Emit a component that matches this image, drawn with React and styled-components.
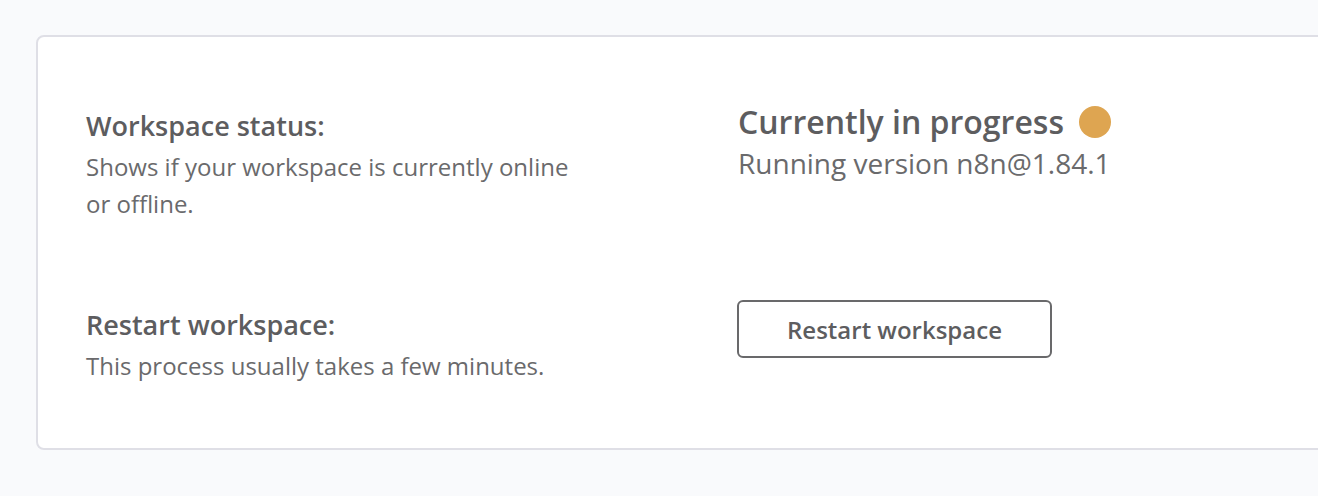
import styled, { createGlobalStyle } from 'styled-components'

const GlobalStyle = createGlobalStyle`
  body {
    margin: 0;
    background-color: #f9fafc;
    font-family: "Open Sans", "Noto Sans", sans-serif;
  }
`

const Page = styled.div`
  padding: 35px 0 46px 36px;
  overflow: hidden;
`

const Card = styled.div`
  width: 1320px;
  height: 415px;
  box-sizing: border-box;
  background-color: #ffffff;
  border: 2px solid #dfdfe6;
  border-radius: 8px;
  padding: 72px 0 0 48px;
  display: grid;
  grid-template-columns: 651px 1fr;
  grid-template-rows: 199px auto;
`

const Info = styled.div`
  display: flex;
  flex-direction: column;
`

const Title = styled.div`
  font-size: 27px;
  font-weight: 600;
  color: #5d5d5f;
  line-height: 34px;
  margin-bottom: 5px;
`

const Desc = styled.div`
  font-size: 24px;
  color: #6a6a6c;
  line-height: 37px;
  max-width: 500px;
`

const StatusHead = styled.div`
  display: flex;
  align-items: center;
  gap: 15px;
  padding-left: 1px;
  font-size: 32px;
  font-weight: 600;
  color: #5d5d5f;
  line-height: 40px;
  margin-top: -7px;
`

const Dot = styled.span`
  width: 32px;
  height: 32px;
  border-radius: 50%;
  background-color: ${p => p.color};
`

const Version = styled.div`
  font-size: 28px;
  color: #6a6a6c;
  line-height: 36px;
  margin-top: 3px;
  padding-left: 1px;
`

const Button = styled.button`
  width: 315px;
  height: 58px;
  margin-top: -8px;
  background: #ffffff;
  border: 2px solid #69696b;
  border-radius: 6px;
  font-family: inherit;
  font-size: 24px;
  font-weight: 600;
  color: #5d5d5f;
  cursor: pointer;
`

export default function App () {
  return (
    <>
      <GlobalStyle />
      <Page>
        <Card>
          <Info>
            <Title>Workspace status:</Title>
            <Desc>Shows if your workspace is currently online or offline.</Desc>
          </Info>
          <Info>
            <StatusHead>
              Currently in progress
              <Dot color='#dea551' />
            </StatusHead>
            <Version>Running version n8n@1.84.1</Version>
          </Info>
          <Info>
            <Title>Restart workspace:</Title>
            <Desc>This process usually takes a few minutes.</Desc>
          </Info>
          <div>
            <Button>Restart workspace</Button>
          </div>
        </Card>
      </Page>
    </>
  )
}
